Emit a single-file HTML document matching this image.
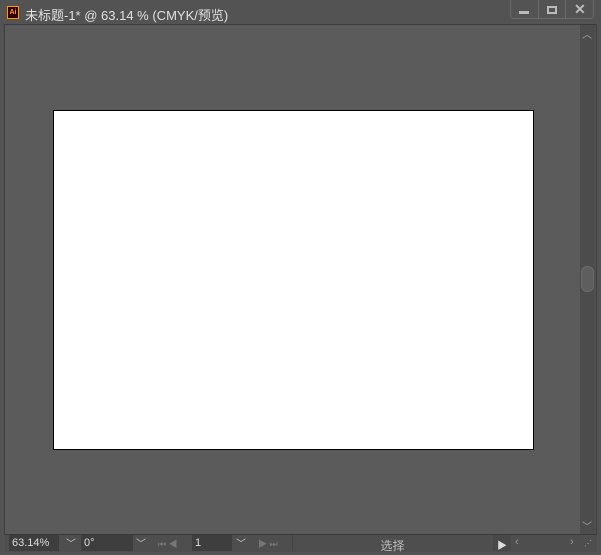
<!DOCTYPE html><html><head><meta charset="utf-8"><style>
body{margin:0;width:601px;height:555px;background:#535353;position:relative;overflow:hidden;font-family:"Liberation Sans","Noto Sans CJK SC",sans-serif;}
div{position:absolute;box-sizing:border-box}
.t{color:#e0e0e0;font-size:13px}
</style></head><body>
<div style="left:7px;top:6px;width:12px;height:13px;background:#330000;border:1px solid #ff9a00;color:#ff9a00;font-size:7px;font-weight:bold;line-height:11px;text-align:center">Ai</div>
<div class="t" style="left:25px;top:5px;white-space:nowrap">未标题-1* @ 63.14 % (CMYK/预览)</div>
<div style="left:510px;top:0;width:84px;height:19px;border:1px solid #6a6a6a;border-top:none;border-radius:0 0 3px 3px"></div>
<div style="left:538px;top:0;width:1px;height:19px;background:#6a6a6a"></div>
<div style="left:565px;top:0;width:1px;height:19px;background:#6a6a6a"></div>
<div style="left:519px;top:11px;width:10px;height:3px;background:#bbb"></div>
<div style="left:547px;top:6px;width:10px;height:8px;border:2px solid #bbb"></div>
<div style="left:574px;top:1px;color:#bbb;font-size:14px;font-weight:bold">✕</div>
<div style="left:4px;top:24px;width:593px;height:1px;background:#3a3a3a"></div>
<div style="left:4px;top:24px;width:1px;height:511px;background:#3e3e3e"></div>
<div style="left:5px;top:25px;width:575px;height:509px;background:#5b5b5b"></div>
<div style="left:580px;top:25px;width:15px;height:509px;background:#4c4c4c"></div>
<div style="left:596px;top:24px;width:1px;height:511px;background:#3e3e3e"></div>
<div style="left:581px;top:266px;width:13px;height:26px;background:#5e5e5e;border:1px solid #6a6a6a;border-radius:6px"></div>
<div style="left:582px;top:26px;color:#aaa;font-size:10px">︿</div>
<div style="left:582px;top:518px;color:#aaa;font-size:10px">﹀</div>
<div style="left:53px;top:110px;width:481px;height:340px;background:#fff;border:1px solid #000"></div>
<div style="left:5px;top:534px;width:592px;height:18px;background:#4e4e4e"></div>
<div style="left:5px;top:534px;width:592px;height:1px;background:#3a3a3a"></div>
<div style="left:9px;top:535px;width:50px;height:16px;background:#3e3e3e;color:#ddd;font-size:11px;padding:2px 3px">63.14%</div>
<div style="left:66px;top:535px;color:#ccc;font-size:10px">﹀</div>
<div style="left:81px;top:535px;width:52px;height:16px;background:#3e3e3e;color:#ddd;font-size:11px;padding:2px 3px">0°</div>
<div style="left:136px;top:535px;color:#ccc;font-size:10px">﹀</div>
<div style="left:158px;top:537px;color:#777;font-size:9px">⏮ ◀</div>
<div style="left:192px;top:535px;width:40px;height:16px;background:#3e3e3e;color:#ddd;font-size:11px;padding:2px 3px">1</div>
<div style="left:236px;top:535px;color:#ccc;font-size:10px">﹀</div>
<div style="left:258px;top:537px;color:#777;font-size:9px">▶ ⏭</div>
<div style="left:292px;top:535px;width:200px;height:16px;border-left:1px solid #444;color:#bbb;font-size:12px;text-align:center;padding-top:2px">选择</div>
<div style="left:493px;top:535px;width:18px;height:16px;background:#484848;color:#ddd;font-size:10px;padding:2px 4px">▶</div>
<div style="left:515px;top:536px;color:#999;font-size:11px">‹</div>
<div style="left:570px;top:536px;color:#999;font-size:11px">›</div>
<div style="left:584px;top:539px;color:#aaa;font-size:8px">⋰</div>
</body></html>
